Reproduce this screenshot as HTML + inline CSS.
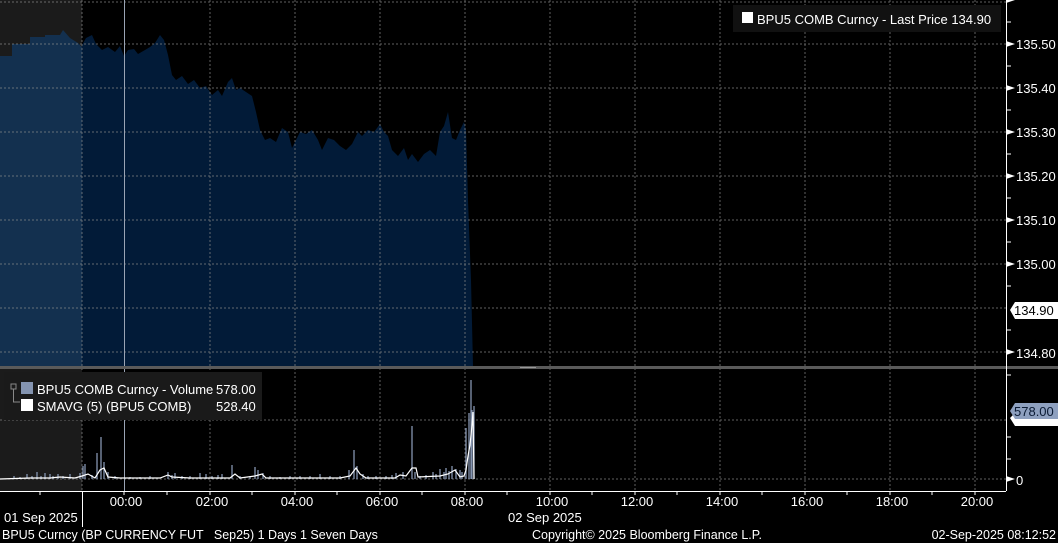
<!DOCTYPE html>
<html><head><meta charset="utf-8"><style>
html,body{margin:0;padding:0;background:#000;}
svg{display:block;font-family:"Liberation Sans","DejaVu Sans",sans-serif;}
text{white-space:pre;}
</style></head><body>
<svg width="1058" height="543" viewBox="0 0 1058 543" xmlns="http://www.w3.org/2000/svg" xml:space="preserve">
<rect width="1058" height="543" fill="#000"/>
<rect x="0" y="0" width="82" height="366" fill="#1b1b1b"/>
<rect x="0" y="369" width="82" height="122" fill="#1b1b1b"/>
<polygon fill="#13304f" points="0,366 0,56 12,56 12,44 30,44 30,37 45,37 45,35 60,35 63,30 70,38 78,43 82,47 82,366"/>
<polygon fill="#021b38" points="82,366 82,45 86,38 92,35 96,44 102,50 108,47 115,52 120,46 124,56 128,50 134,49 138,54 145,50 150,47 155,43 160,35 164,40 168,55 172,75 176,80 182,76 188,84 194,80 200,88 206,86 212,95 218,90 222,96 228,82 232,78 236,90 240,88 246,92 252,96 256,112 260,130 265,140 270,138 276,142 282,128 288,132 292,148 296,140 300,132 306,134 312,130 318,140 322,150 328,138 334,140 340,146 346,150 352,144 358,132 362,136 368,130 374,132 380,124 384,132 388,136 392,150 398,156 404,148 408,160 412,154 418,162 424,154 430,150 436,156 440,132 444,126 448,112 452,138 456,140 460,130 464,122 466,130 468,200 471,280 473,366"/>
<g stroke="#8a8a8a" stroke-width="1" stroke-dasharray="2,2" opacity="0.7">
<line x1="0" y1="2" x2="1006" y2="2"/>
<line x1="0" y1="44" x2="1006" y2="44"/>
<line x1="0" y1="88" x2="1006" y2="88"/>
<line x1="0" y1="132" x2="1006" y2="132"/>
<line x1="0" y1="176" x2="1006" y2="176"/>
<line x1="0" y1="220" x2="1006" y2="220"/>
<line x1="0" y1="264" x2="1006" y2="264"/>
<line x1="0" y1="308" x2="1006" y2="308"/>
<line x1="0" y1="352" x2="1006" y2="352"/>
<line x1="0" y1="420" x2="1006" y2="420"/>
<line x1="0" y1="479" x2="1006" y2="479"/>
<line x1="82" y1="0" x2="82" y2="491"/>
<line x1="210" y1="0" x2="210" y2="491"/>
<line x1="295" y1="0" x2="295" y2="491"/>
<line x1="380" y1="0" x2="380" y2="491"/>
<line x1="465" y1="0" x2="465" y2="491"/>
<line x1="550" y1="0" x2="550" y2="491"/>
<line x1="635" y1="0" x2="635" y2="491"/>
<line x1="720" y1="0" x2="720" y2="491"/>
<line x1="805" y1="0" x2="805" y2="491"/>
<line x1="890" y1="0" x2="890" y2="491"/>
<line x1="975" y1="0" x2="975" y2="491"/>
</g>
<line x1="124.5" y1="0" x2="124.5" y2="491" stroke="#9aa4b4" stroke-width="1"/>
<rect x="0" y="366" width="1058" height="3" fill="#5a5a5a"/>
<rect x="520" y="367" width="16" height="1" fill="#999"/>
<g stroke="#8494b0" stroke-width="1.3">
<path d="M27 479V474M37 479V472M45 479V473M50 479V474M58 479V474M70 479V474M80 479V473M83 479V466M85 479V464M97 479V453M101 479V437M104 479V462M108 479V472M168 479V472M175 479V473M200 479V473M206 479V474M222 479V474M232 479V465M255 479V467M258 479V470M263 479V473M320 479V474M349 479V470M354 479V450M357 479V466M363 479V474M396 479V473M403 479V472M412 479V426M415 479V472M433 479V472M440 479V469M446 479V468M452 479V466M460 479V470M466 479V428M469 479V413M471 479V380M472 479V410M474 479V406"/>
<path d="M14 479V476M20 479V477M32 479V476M41 479V476M53 479V476M63 479V476M92 479V475M115 479V476M130 479V477M140 479V477M150 479V476M172 479V475M182 479V476M190 479V476M212 479V476M218 479V475M240 479V476M250 479V476M270 479V476M280 479V477M290 479V476M300 479V476M310 479V476M330 479V476M340 479V476M368 479V476M376 479V476M386 479V476M392 479V475M420 479V476M426 479V475M436 479V474M444 479V472M449 479V471M456 479V469M462 479V472"/>
</g>
<polyline fill="none" stroke="#fff" stroke-width="1.2" points="0,479 30,478 50,478 60,477 75,478 82,476 88,474 95,478 100,470 104,468 108,477 120,478 160,478 168,475 172,477 190,478 230,478 235,474 240,478 255,476 262,474 266,478 300,478 340,478 350,476 356,468 360,474 366,478 395,478 400,475 406,476 412,468 416,468 418,477 440,476 448,474 455,470 460,477 464,476 466,470 468,456 470,445 472,425 473,412 474,479"/>
<rect x="4" y="372" width="258" height="48" fill="#1a1a1a"/>
<rect x="11" y="384" width="5" height="5" fill="none" stroke="#888" stroke-width="1"/>
<path d="M13.5 389V402H20" stroke="#888" fill="none"/>
<rect x="21" y="382" width="12" height="12" fill="#8494b0"/>
<rect x="21" y="399" width="12" height="12" fill="#fff"/>
<text x="37" y="394" fill="#fff" font-size="13">BPU5 COMB Curncy - Volume</text>
<text x="216" y="394" fill="#fff" font-size="13">578.00</text>
<text x="37" y="411" fill="#fff" font-size="13">SMAVG (5) (BPU5 COMB)</text>
<text x="216" y="411" fill="#fff" font-size="13">528.40</text>
<rect x="733" y="5" width="268" height="27" fill="#111"/>
<rect x="742" y="12" width="11" height="11" fill="#fff"/>
<text x="757" y="24" fill="#fff" font-size="13">BPU5 COMB Curncy - Last Price 134.90</text>
<line x1="1006.5" y1="0" x2="1006.5" y2="491" stroke="#fff"/>
<g stroke="#fff"><path d="M1006 22H1011M1006 66H1011M1006 110H1011M1006 154H1011M1006 198H1011M1006 242H1011M1006 286H1011M1006 330H1011M1006 375H1011M1006 437H1011M1006 459H1011"/></g>
<g fill="#fff"><path d="M1006 41l9 3-9 3zM1006 85l9 3-9 3zM1006 129l9 3-9 3zM1006 173l9 3-9 3zM1006 217l9 3-9 3zM1006 261l9 3-9 3zM1006 349l9 3-9 3zM1006 476l9 3-9 3zM1006 0l9 0-9 3z"/></g>
<g fill="#fff" font-size="13">
<text x="1016" y="49">135.50</text>
<text x="1016" y="93">135.40</text>
<text x="1016" y="137">135.30</text>
<text x="1016" y="181">135.20</text>
<text x="1016" y="225">135.10</text>
<text x="1016" y="269">135.00</text>
<text x="1016" y="358">134.80</text>
<text x="1016" y="485">0</text>
</g>
<path d="M1010 310l5-8h43v17h-43z" fill="#fff"/>
<text x="1014" y="315" fill="#000" font-size="13">134.90</text>
<path d="M1010 418l5-5h43v13h-43z" fill="#fff"/>
<path d="M1010 411l5-8h43v16h-43z" fill="#8ea0bf"/>
<text x="1014" y="416" fill="#0a1a33" font-size="13">578.00</text>
<line x1="0" y1="491.5" x2="1006" y2="491.5" stroke="#fff"/>
<g stroke="#fff"><path d="M40 491v4M124 491v4M167 491v4M210 491v4M252 491v4M295 491v4M337 491v4M380 491v4M422 491v4M465 491v4M507 491v4M550 491v4M592 491v4M635 491v4M677 491v4M720 491v4M762 491v4M805 491v4M847 491v4M890 491v4M932 491v4M975 491v4"/></g>
<line x1="82.5" y1="491" x2="82.5" y2="527" stroke="#fff"/>
<g fill="#fff" font-size="13" text-anchor="middle">
<text x="126" y="506">00:00</text>
<text x="212" y="506">02:00</text>
<text x="297" y="506">04:00</text>
<text x="382" y="506">06:00</text>
<text x="467" y="506">08:00</text>
<text x="552" y="506">10:00</text>
<text x="637" y="506">12:00</text>
<text x="722" y="506">14:00</text>
<text x="807" y="506">16:00</text>
<text x="892" y="506">18:00</text>
<text x="977" y="506">20:00</text>
</g>
<text x="4" y="522" fill="#fff" font-size="13">01 Sep 2025</text>
<text x="508" y="522" fill="#fff" font-size="13">02 Sep 2025</text>
<g fill="#fff" font-size="12.5">
<text x="2" y="539">BPU5 Curncy (BP CURRENCY FUT   Sep25) 1 Days 1 Seven Days</text>
<text x="532" y="539">Copyright© 2025 Bloomberg Finance L.P.</text>
<text x="1056" y="539" text-anchor="end">02-Sep-2025 08:12:52</text>
</g>
</svg>
</body></html>
